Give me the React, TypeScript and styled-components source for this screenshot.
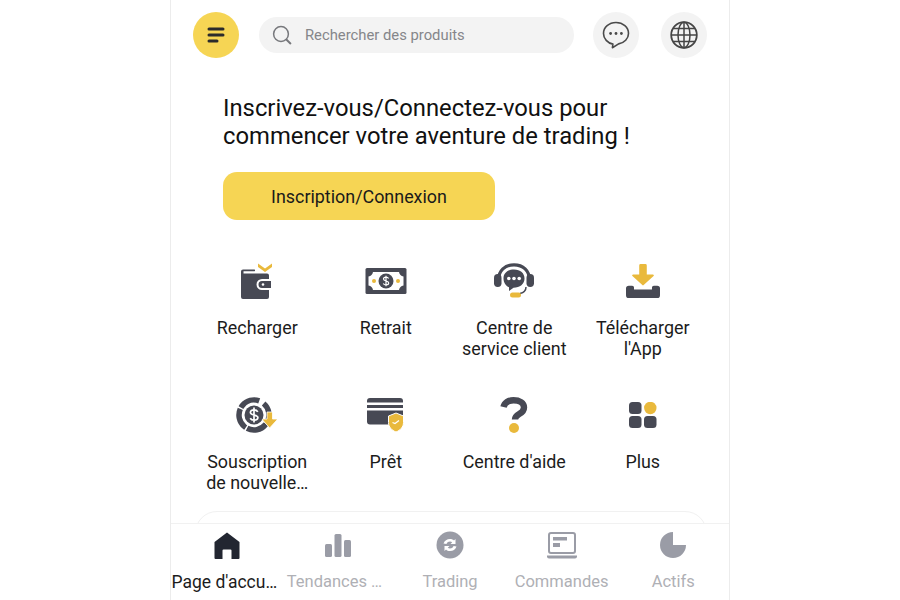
import React from "react";
import styled, { createGlobalStyle } from "styled-components";

const DARK = "#474954";
const GOLD = "#e9b93c";
const MUTED = "#9a9ca6";

const GlobalStyle = createGlobalStyle`
  html, body { margin: 0; padding: 0; background: #fff; }
  body { font-family: Roboto, "Liberation Sans", sans-serif; }
  * { box-sizing: border-box; }
`;

const Page = styled.div`
  display: flex;
  justify-content: center;
  height: 600px;
  overflow: hidden;
`;

const Phone = styled.div`
  width: 560px;
  height: 600px;
  display: flex;
  flex-direction: column;
  border-left: 1px solid #ececec;
  border-right: 1px solid #ececec;
  background: #fff;
`;

const Content = styled.div`
  flex: 1;
  min-height: 0;
  overflow: hidden;
`;

const Header = styled.header`
  display: flex;
  align-items: center;
  padding: 12px 22px 0;
`;

const MenuButton = styled.button`
  width: 46px;
  height: 46px;
  border: none;
  padding: 0;
  border-radius: 50%;
  background: #f6d554;
  display: flex;
  align-items: center;
  justify-content: center;
`;

const SearchBar = styled.div`
  width: 315px;
  height: 36px;
  margin-left: 20px;
  margin-right: 19px;
  padding-left: 13px;
  border-radius: 18px;
  background: #f3f3f3;
  display: flex;
  align-items: center;
  gap: 13px;
  font-size: 14.8px;
  color: #85868a;
`;

const RoundButton = styled.button<{ $gap?: number }>`
  width: 46px;
  height: 46px;
  border: none;
  padding: 0;
  margin-left: ${(p) => p.$gap ?? 0}px;
  border-radius: 50%;
  background: #f3f3f3;
  display: flex;
  align-items: center;
  justify-content: center;
`;

const Hero = styled.section`
  padding: 36px 0 0 52px;
`;

const Title = styled.h1`
  margin: 0;
  font-size: 23.8px;
  line-height: 28px;
  font-weight: 400;
  color: #111;
`;

const SignButton = styled.button`
  display: block;
  width: 272px;
  height: 48px;
  margin-top: 22px;
  border: none;
  border-radius: 14px;
  background: #f6d554;
  font: 400 17.9px Roboto, sans-serif;
  color: #1a1a1a;
`;

const Shortcuts = styled.div`
  display: grid;
  grid-template-columns: repeat(4, 128.5px);
  grid-template-rows: 134px 117px;
  padding: 40px 0 0 22px;
`;

const Shortcut = styled.div`
  display: flex;
  flex-direction: column;
  align-items: center;
  text-align: center;
`;

const ShortcutIcon = styled.div`
  width: 44px;
  height: 42px;
  display: flex;
  align-items: center;
  justify-content: center;
`;

const ShortcutLabel = styled.div`
  margin-top: 15px;
  width: 122px;
  font-size: 17.9px;
  line-height: 21px;
  color: #1c1c1c;
`;

const PeekCard = styled.div`
  width: 512px;
  height: 120px;
  margin-left: 24px;
  border: 1px solid #f1f1f1;
  border-radius: 22px;
`;

const TabBar = styled.nav`
  height: 77px;
  flex-shrink: 0;
  display: grid;
  grid-template-columns: repeat(5, 1fr);
  border-top: 1px solid #f1f1f1;
  background: #fff;
`;

const Tab = styled.div<{ $active?: boolean }>`
  min-width: 0;
  display: flex;
  flex-direction: column;
  align-items: center;
  padding-top: 6px;
  color: ${(p) => (p.$active ? "#1c1c1c" : "#afb0b5")};
`;

const TabIcon = styled.div`
  height: 30px;
  display: flex;
  align-items: center;
  justify-content: center;
`;

const TabLabel = styled.div<{ $active?: boolean; $trim?: number }>`
  margin-top: 12px;
  margin-right: ${(p) => p.$trim ?? 0}px;
  font-size: ${(p) => (p.$active ? 17.5 : 16.5)}px;
  line-height: 20px;
  white-space: nowrap;
`;

const MenuIcon = () => (
  <svg width="18" height="16" viewBox="0 0 18 16">
    <rect x="0.5" y="0.5" width="17" height="3" rx="1.5" fill="#2b2b2b" />
    <rect x="0.5" y="6.5" width="17" height="3" rx="1.5" fill="#2b2b2b" />
    <rect x="0.5" y="12.5" width="11" height="3" rx="1.5" fill="#2b2b2b" />
  </svg>
);

const SearchIcon = () => (
  <svg width="20" height="20" viewBox="0 0 20 20" fill="none" stroke="#77787c" strokeWidth="1.5" strokeLinecap="round">
    <circle cx="9" cy="9" r="7.4" />
    <path d="M14.6 14.8 L18.4 18.4" strokeWidth="2" />
  </svg>
);

const ChatIcon = () => (
  <svg width="28" height="28" viewBox="0 0 28 28" fill="none">
    <path
      d="M14 1.5C7 1.5 1.5 6.3 1.5 12.4c0 5.3 4.1 9.7 9.4 10.7l-.5 3.6 6.2-3.8C22.3 22 26.5 17.7 26.5 12.4 26.5 6.3 21 1.5 14 1.5Z"
      stroke="#4a4a4a"
      strokeWidth="1.6"
      strokeLinejoin="round"
    />
    <circle cx="8.6" cy="12.5" r="1.4" fill="#4a4a4a" />
    <circle cx="14" cy="12.5" r="1.4" fill="#4a4a4a" />
    <circle cx="19.4" cy="12.5" r="1.4" fill="#4a4a4a" />
  </svg>
);

const GlobeIcon = () => (
  <svg width="28" height="28" viewBox="0 0 28 28" fill="none" stroke="#454545" strokeWidth="1.5">
    <circle cx="14" cy="14" r="12.8" strokeWidth="1.8" />
    <ellipse cx="14" cy="14" rx="6" ry="12.8" />
    <path d="M14 1.2V26.8M1.2 14H26.8M3 7.5H25M3 20.5H25" />
  </svg>
);

const WalletIcon = () => (
  <svg width="34" height="36" viewBox="0 0 34 36" fill="none">
    <path d="M18 0.5l7 5 7-5v3.5l-7 5-7-5Z" fill={GOLD} />
    <path
      d="M3 6.5h11.5a1 1 0 0 1 0 1.8H3.5v2.2H27a2 2 0 0 1 2 2V16h-7a5.5 5.5 0 0 0 0 11h7v7a2 2 0 0 1-2 2H3a2 2 0 0 1-2-2V8.5a2 2 0 0 1 2-2Z"
      fill={DARK}
    />
    <path d="M22 18h9v7h-9a3.5 3.5 0 0 1 0-7Z" fill={DARK} />
    <circle cx="23" cy="21.5" r="1.3" fill="#fff" />
  </svg>
);

const CashIcon = () => (
  <svg width="42" height="26" viewBox="0 0 42 26">
    <rect x="0.5" y="0" width="41" height="26" rx="1.5" fill={DARK} />
    <path d="M8 4h26c.5 2.5 2 4 4.5 4.5v9c-2.5.5-4 2-4.5 4.5H8c-.5-2.5-2-4-4.5-4.5v-9C6 8 7.5 6.5 8 4Z" fill="#fff" />
    <circle cx="21" cy="13" r="7.5" fill={DARK} />
    <circle cx="9" cy="13" r="2" fill={GOLD} />
    <circle cx="33" cy="13" r="2" fill={GOLD} />
    <path d="M23.6 10.5c-.5-1-1.5-1.4-2.6-1.4-1.4 0-2.5.8-2.5 1.9 0 2.6 5.2 1.4 5.2 4 0 1.1-1.1 1.9-2.7 1.9-1.2 0-2.2-.5-2.7-1.5M21 7.8v10.4" fill="none" stroke="#fff" strokeWidth="1.2" />
  </svg>
);

const HeadsetIcon = () => (
  <svg width="42" height="36" viewBox="0 0 42 36" fill="none">
    <path d="M5.5 17C5.5 7.5 12 1.8 21 1.8S36.5 7.5 36.5 17" stroke={DARK} strokeWidth="3.2" />
    <rect x="1" y="11" width="7.5" height="13" rx="3.7" fill={DARK} />
    <rect x="33.5" y="11" width="7.5" height="13" rx="3.7" fill={DARK} />
    <path d="M21 6.5c-6.5 0-10.5 3.8-10.5 9 0 4.3 2.5 7.3 5.5 8.8v3.7l4.5-3.2C27 24.8 31.500 21 31.5 15.5 31.5 10.3 27.5 6.5 21 6.5Z" fill={DARK} />
    <circle cx="15.8" cy="15.5" r="1.8" fill="#fff" />
    <circle cx="21" cy="15.5" r="1.8" fill="#fff" />
    <circle cx="26.2" cy="15.5" r="1.8" fill="#fff" />
    <path d="M33 24c0 3.5-2 5.5-6 6.5" stroke={DARK} strokeWidth="1.5" />
    <rect x="17" y="29.5" width="11" height="5" rx="2.5" fill={GOLD} />
  </svg>
);

const DownloadIcon = () => (
  <svg width="34" height="36" viewBox="0 0 36 36">
    <path d="M14 1.5a1.5 1.5 0 0 1 1.5-1.5h5A1.5 1.5 0 0 1 22 1.5V11h6.5a1 1 0 0 1 .7 1.7L18.7 22.3a1 1 0 0 1-1.4 0L6.8 12.7A1 1 0 0 1 7.5 11H14Z" fill={GOLD} />
    <path d="M3 23h3.5a2 2 0 0 1 2 2v2h19v-2a2 2 0 0 1 2-2H33a3 3 0 0 1 3 3v7a3 3 0 0 1-3 3H3a3 3 0 0 1-3-3v-7a3 3 0 0 1 3-3Z" fill={DARK} />
  </svg>
);

const CoinIcon = () => (
  <svg width="42" height="36" viewBox="0 0 42 36" fill="none">
    <circle cx="18" cy="18" r="15" stroke={DARK} strokeWidth="5.5" strokeDasharray="21 1.5 21 1.5 21 1.5 21 7" transform="rotate(-50 18 18)" />
    <circle cx="18" cy="18" r="9.5" fill={DARK} />
    <path d="M21.8 14.8c-.7-1.3-2.1-2-3.7-2-2.2 0-3.7 1.1-3.700 2.6 0 3.4 7.5 1.900 7.500 5.200 0 1.500-1.600 2.600-3.800 2.600-1.800 0-3.200-.8-3.900-2M18 10.500v15" stroke="#fff" strokeWidth="1.7" />
    <path d="M31 15h5.500v7h4a.6.6 0 0 1 .4 1l-6.800 7.500a.6.6 0 0 1-.9 0L26.600 23a.6.6 0 0 1 .4-1h4Z" fill={GOLD} stroke="#fff" strokeWidth="0.8" />
  </svg>
);

const CardIcon = () => (
  <svg width="38" height="34" viewBox="0 0 38 34">
    <path d="M3 0h30a3 3 0 0 1 3 3v1.5H0V3a3 3 0 0 1 3-3Z" fill={DARK} />
    <rect x="0" y="7" width="36" height="3" fill={DARK} />
    <path d="M0 12.5h36V24H26v2.5H3a3 3 0 0 1-3-3Z" fill={DARK} />
    <path d="M29 15l7.5 3v6.5c0 4.500-3.200 7.800-7.500 9.500-4.300-1.700-7.500-5-7.500-9.500V18Z" fill={GOLD} stroke="#fff" strokeWidth="1" />
    <path d="M25.5 24.5l2.5 1 4-3" fill="none" stroke="#fff" strokeWidth="1.2" />
  </svg>
);

const QuestionIcon = () => (
  <svg width="28" height="36" viewBox="0 0 28 36" fill="none">
    <path d="M3.5 10C4.500 5.500 8.500 3.200 13.500 3.200c6 0 10.500 2.800 10.500 7.200 0 3.300-2 5-4.800 6.600-2.600 1.500-4.200 2.700-4.200 5.500" stroke={DARK} strokeWidth="6.4" />
    <circle cx="14" cy="31" r="5" fill={GOLD} />
  </svg>
);

const AppsIcon = () => (
  <svg width="28" height="26" viewBox="0 0 28 26">
    <rect x="0" y="0" width="12.5" height="12" rx="3.5" fill={DARK} />
    <circle cx="21.3" cy="6" r="6.2" fill={GOLD} />
    <rect x="0" y="14" width="12.5" height="12" rx="3.5" fill={DARK} />
    <rect x="15" y="14" width="12.5" height="12" rx="3.5" fill={DARK} />
  </svg>
);

const HomeIcon = () => (
  <svg width="26" height="27" viewBox="0 0 26 27">
    <path d="M13 0.5 25.5 10v16a1 1 0 0 1-1 1H17.5v-8.5a1 1 0 0 0-1-1h-7a1 1 0 0 0-1 1V27H1.5a1 1 0 0 1-1-1V10Z" fill="#222631" />
  </svg>
);

const BarsIcon = () => (
  <svg width="26" height="23" viewBox="0 0 26 23" fill={MUTED}>
    <rect x="0" y="10" width="7" height="13" rx="1.5" />
    <rect x="9.5" y="0" width="7" height="23" rx="1.5" />
    <rect x="19" y="6" width="7" height="17" rx="1.5" />
  </svg>
);

const TradeIcon = () => (
  <svg width="28" height="28" viewBox="0 0 28 28">
    <circle cx="14" cy="14" r="13.5" fill={MUTED} />
    <path d="M7.5 12.5C8.5 9.5 11 8 14 8c1.7 0 3 .5 4 1.5l1.5-1.5v5h-5l1.7-1.7c-.6-.5-1.4-.8-2.2-.8-1.6 0-2.9.8-3.6 2.5Z" fill="#fff" />
    <path d="M20.5 15.5C19.5 18.5 17 20 14 20c-1.7 0-3-.5-4-1.5L8.5 20v-5h5l-1.7 1.7c.6.5 1.4.8 2.2.8 1.6 0 2.9-.8 3.6-2.5Z" fill="#fff" />
  </svg>
);

const LaptopIcon = () => (
  <svg width="30" height="27" viewBox="0 0 30 27" fill="none">
    <rect x="2" y="1" width="26" height="20" rx="2" stroke={MUTED} strokeWidth="2" />
    <rect x="6" y="5" width="14" height="3.5" fill={MUTED} />
    <rect x="6" y="11" width="7" height="4" fill={MUTED} />
    <path d="M0 23.5h30v1a2 2 0 0 1-2 2H2a2 2 0 0 1-2-2Z" fill={MUTED} />
  </svg>
);

const PieIcon = () => (
  <svg width="26" height="26" viewBox="0 0 26 26">
    <path d="M13 0V13H26A13 13 0 1 1 13 0Z" fill={MUTED} />
  </svg>
);

const shortcuts = [
  { label: "Recharger", icon: <WalletIcon /> },
  { label: "Retrait", icon: <CashIcon /> },
  { label: "Centre de service client", icon: <HeadsetIcon /> },
  { label: "Télécharger l'App", icon: <DownloadIcon /> },
  { label: "Souscription de nouvelle…", icon: <CoinIcon /> },
  { label: "Prêt", icon: <CardIcon /> },
  { label: "Centre d'aide", icon: <QuestionIcon /> },
  { label: "Plus", icon: <AppsIcon /> },
];

const tabs = [
  { label: "Page d'accu…", icon: <HomeIcon />, active: true, trim: 5 },
  { label: "Tendances …", icon: <BarsIcon />, trim: 8 },
  { label: "Trading", icon: <TradeIcon /> },
  { label: "Commandes", icon: <LaptopIcon /> },
  { label: "Actifs", icon: <PieIcon /> },
];

const App: React.FC = () => {
  return (
    <Page>
      <GlobalStyle />
      <Phone>
        <Content>
          <Header>
            <MenuButton>
              <MenuIcon />
            </MenuButton>
            <SearchBar>
              <SearchIcon />
              Rechercher des produits
            </SearchBar>
            <RoundButton>
              <ChatIcon />
            </RoundButton>
            <RoundButton $gap={22}>
              <GlobeIcon />
            </RoundButton>
          </Header>
          <Hero>
            <Title>
              Inscrivez-vous/Connectez-vous pour
              <br />
              commencer votre aventure de trading !
            </Title>
            <SignButton>Inscription/Connexion</SignButton>
          </Hero>
          <Shortcuts>
            {shortcuts.map((s) => (
              <Shortcut key={s.label}>
                <ShortcutIcon>{s.icon}</ShortcutIcon>
                <ShortcutLabel>{s.label}</ShortcutLabel>
              </Shortcut>
            ))}
          </Shortcuts>
          <PeekCard />
        </Content>
        <TabBar>
          {tabs.map((t) => (
            <Tab key={t.label} $active={t.active}>
              <TabIcon>{t.icon}</TabIcon>
              <TabLabel $active={t.active} $trim={t.trim}>
                {t.label}
              </TabLabel>
            </Tab>
          ))}
        </TabBar>
      </Phone>
    </Page>
  );
};

export default App;
